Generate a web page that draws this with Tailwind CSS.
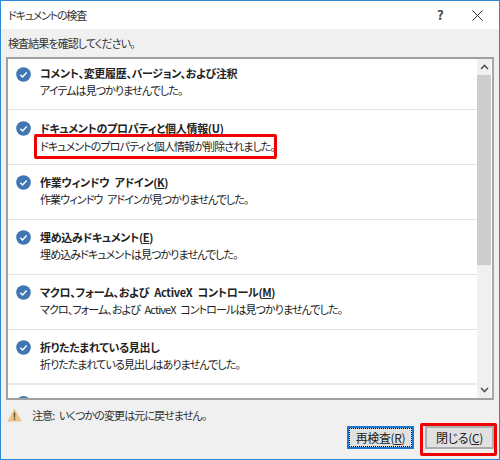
<!DOCTYPE html>
<html lang="ja">
<head>
<meta charset="UTF-8">
<title>ドキュメントの検査</title>
<script src="https://cdn.jsdelivr.net/npm/@tailwindcss/browser@4"></script>
</head>
<body class="m-0 bg-white">
<div class="relative w-[500px] h-[460px] overflow-hidden flex flex-col border border-[#2b8ad8] bg-[#f0f0f0] text-[11px] leading-[16px] text-[#222] font-['Noto_Sans_CJK_JP','Noto_Sans',sans-serif] [font-feature-settings:'palt'] [word-spacing:3px] tracking-[-0.9px]">
  <!-- title bar -->
  <div class="h-[28px] shrink-0 bg-white flex items-center pl-[7px]">
    <span class="flex-1 text-[#333] tracking-[-1.2px]">ドキュメントの検査</span>
    <span class="w-[14px] text-center text-[13px] font-bold text-[#444] mr-[25px]">?</span>
    <svg class="w-[11px] h-[11px] mr-[16px]" viewBox="0 0 11 11" fill="none" stroke="#333" stroke-width="1"><path d="M.5.5l10 10M10.5.5l-10 10"/></svg>
  </div>
  <div class="h-[28px] shrink-0 flex items-center pl-[7px] text-[#333]">検査結果を確認してください。</div>
  <!-- list box -->
  <div class="mx-[5px] h-[343px] shrink-0 border-2 border-[#a0a0a0] border-r-[#a8a8a8] bg-white flex overflow-hidden">
    <div class="flex-1 min-w-0 flex flex-col">
      <div class="h-[51px] shrink-0 flex border-b border-[#e2e2e2] pl-[8px] pt-[6px]">
        <svg class="w-[15px] h-[15px] mt-[2px] mr-[9px]" viewBox="0 0 16 16"><circle cx="8" cy="8" r="7.8" fill="#3f76b3"/><path d="M4.6 8.2l2.4 2.4 4.4-4.8" fill="none" stroke="#fff" stroke-width="1.6"/></svg>
        <div><p class="font-bold tracking-[-0.3px]">コメント、変更履歴、バージョン、および注釈</p><p class="mt-[1px]">アイテムは見つかりませんでした。</p></div>
      </div>
      <div class="h-[55px] shrink-0 flex border-b border-[#e2e2e2] pl-[8px] pt-[10px]">
        <svg class="w-[15px] h-[15px] mt-[1px] mr-[9px]" viewBox="0 0 16 16"><circle cx="8" cy="8" r="7.8" fill="#3f76b3"/><path d="M4.6 8.2l2.4 2.4 4.4-4.8" fill="none" stroke="#fff" stroke-width="1.6"/></svg>
        <div><p class="font-bold tracking-[-0.3px]">ドキュメントのプロパティと個人情報(<u>U</u>)</p><p class="mt-[2px]">ドキュメントのプロパティと個人情報が削除されました。</p></div>
      </div>
      <div class="h-[55px] shrink-0 flex border-b border-[#e2e2e2] pl-[8px] pt-[9px]">
        <svg class="w-[15px] h-[15px] mt-[1px] mr-[9px]" viewBox="0 0 16 16"><circle cx="8" cy="8" r="7.8" fill="#3f76b3"/><path d="M4.6 8.2l2.4 2.4 4.4-4.8" fill="none" stroke="#fff" stroke-width="1.6"/></svg>
        <div><p class="font-bold tracking-[-0.3px]">作業ウィンドウ アドイン(<u>K</u>)</p><p class="mt-[1px]">作業ウィンドウ アドインが見つかりませんでした。</p></div>
      </div>
      <div class="h-[55px] shrink-0 flex border-b border-[#e2e2e2] pl-[8px] pt-[9px]">
        <svg class="w-[15px] h-[15px] mt-[1px] mr-[9px]" viewBox="0 0 16 16"><circle cx="8" cy="8" r="7.8" fill="#3f76b3"/><path d="M4.6 8.2l2.4 2.4 4.4-4.8" fill="none" stroke="#fff" stroke-width="1.6"/></svg>
        <div><p class="font-bold tracking-[-0.3px]">埋め込みドキュメント(<u>E</u>)</p><p class="mt-[1px]">埋め込みドキュメントは見つかりませんでした。</p></div>
      </div>
      <div class="h-[55px] shrink-0 flex border-b border-[#e2e2e2] pl-[8px] pt-[9px]">
        <svg class="w-[15px] h-[15px] mt-[1px] mr-[9px]" viewBox="0 0 16 16"><circle cx="8" cy="8" r="7.8" fill="#3f76b3"/><path d="M4.6 8.2l2.4 2.4 4.4-4.8" fill="none" stroke="#fff" stroke-width="1.6"/></svg>
        <div><p class="font-bold tracking-[-0.3px]">マクロ、フォーム、および ActiveX コントロール(<u>M</u>)</p><p class="mt-[1px]">マクロ、フォーム、および ActiveX コントロールは見つかりませんでした。</p></div>
      </div>
      <div class="h-[55px] shrink-0 flex border-b-2 border-[#e8e8e8] pl-[8px] pt-[9px]">
        <svg class="w-[15px] h-[15px] mt-[1px] mr-[9px]" viewBox="0 0 16 16"><circle cx="8" cy="8" r="7.8" fill="#3f76b3"/><path d="M4.6 8.2l2.4 2.4 4.4-4.8" fill="none" stroke="#fff" stroke-width="1.6"/></svg>
        <div><p class="font-bold tracking-[-0.3px]">折りたたまれている見出し</p><p class="mt-[1px]">折りたたまれている見出しはありませんでした。</p></div>
      </div>
      <div class="flex-1 overflow-hidden pl-[8px] pt-[11px]">
        <div class="w-[15px] h-[15px] rounded-full bg-[#3f76b3]"></div>
      </div>
    </div>
    <!-- scrollbar -->
    <div class="w-[14px] shrink-0 mr-[1px] flex flex-col bg-[#f0f0f0]">
      <div class="h-[16px] flex items-center justify-center"><svg class="w-[9px] h-[6px]" viewBox="0 0 9 6" fill="none" stroke="#555" stroke-width="1.6"><path d="M1 5l3.5-3.5L8 5"/></svg></div>
      <div class="h-[190px] bg-[#cdcdcd]"></div>
      <div class="flex-1"></div>
      <div class="h-[16px] flex items-center justify-center"><svg class="w-[9px] h-[6px]" viewBox="0 0 9 6" fill="none" stroke="#555" stroke-width="1.6"><path d="M1 1l3.5 3.5L8 1"/></svg></div>
    </div>
  </div>
  <!-- warning -->
  <div class="h-[26px] shrink-0 flex items-center pl-[6px] pt-[3px]">
    <svg class="w-[15px] h-[14px] mr-[10px]" viewBox="0 0 15 14"><path d="M7.5.5L14.7 13.5H.3z" fill="#e8c48a"/><path d="M7.5 4.5v5M7.5 10.5v1.6" stroke="#5a4a30" stroke-width="1.4"/></svg>
    <span class="text-[#333] tracking-[-0.9px]">注意: いくつかの変更は元に戻せません。</span>
  </div>
  <!-- buttons -->
  <div class="flex justify-end gap-[11px] pr-[5px] text-[12px] tracking-[-0.35px]">
    <button class="w-[67px] h-[23px] border-2 border-[#1a78d0] bg-[#e1e1e1] text-[#222] outline-1 outline-dotted -outline-offset-3 outline-black">再検査(<u>R</u>)</button>
    <button class="w-[69px] h-[23px] border-2 border-[#adadad] bg-[#e1e1e1] text-[#222]">閉じる(<u>C</u>)</button>
  </div>
  <!-- red callouts -->
  <div class="absolute left-[33px] top-[133px] w-[243px] h-[25px] border-[3px] border-[#f00000] rounded-[2px]"></div>
  <div class="absolute left-[419px] top-[422px] w-[77px] h-[33px] border-[3px] border-[#f00000] rounded-[2px]"></div>
</div>
</body>
</html>
